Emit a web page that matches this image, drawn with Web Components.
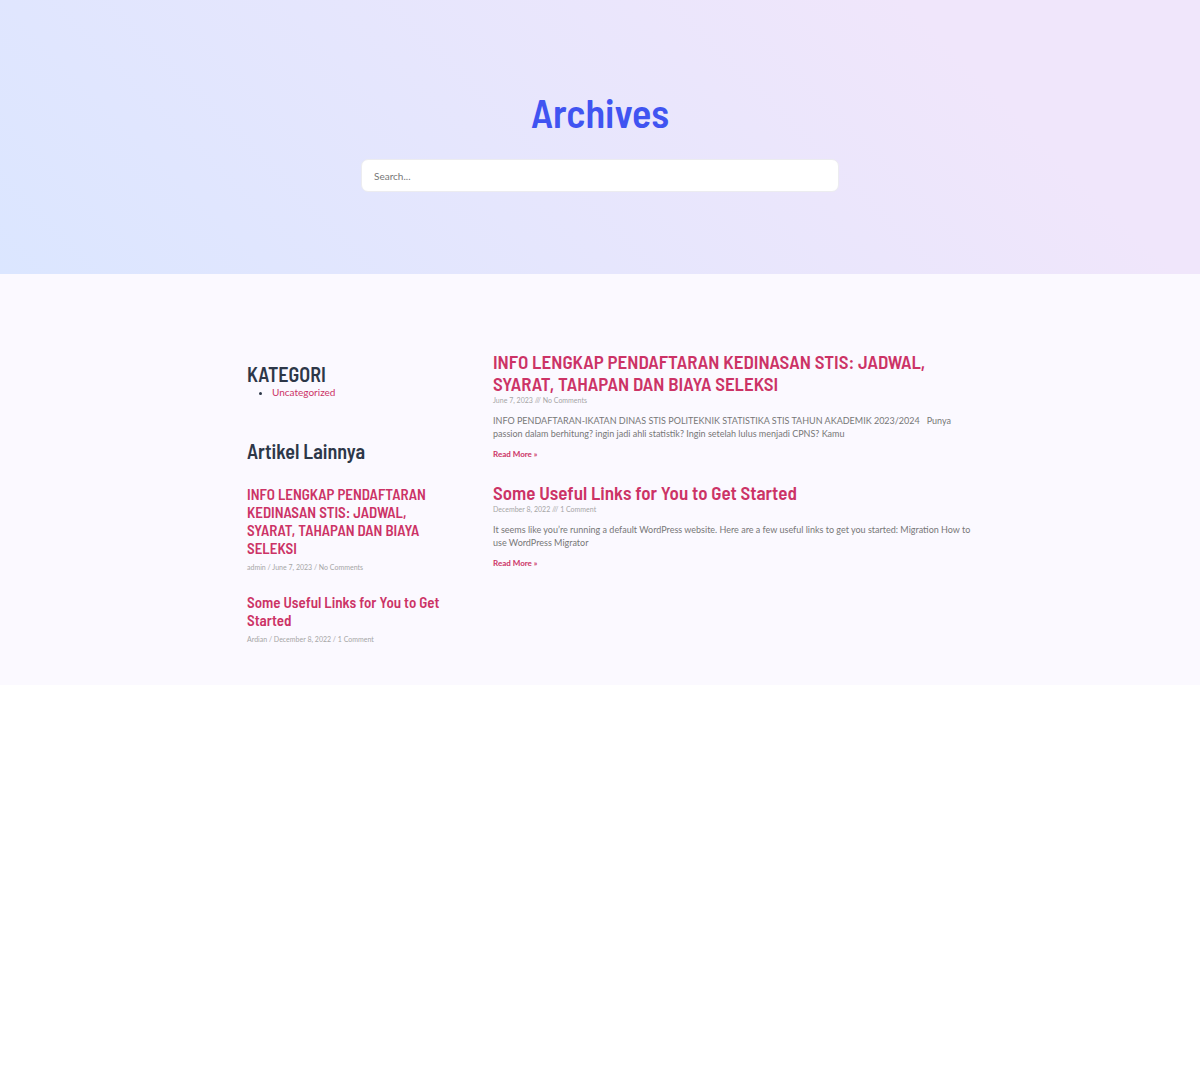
<!DOCTYPE html>
<html lang="id">
<head>
<meta charset="utf-8">
<meta name="viewport" content="width=device-width, initial-scale=1">
<title>Archives</title>
<style>
  body {
    margin: 0;
    background: #fff;
    color: #2d3748;
    font-family: Lato, sans-serif;
    --heading: "Barlow Semi Condensed", "Roboto Condensed", "Liberation Sans Narrow", Roboto, sans-serif;
    --accent: #cc3366;
    --ink: #2d3748;
    --body: #777;
    --muted: #a6a6a6;
  }
</style>
</head>
<body>
<archive-page></archive-page>

<script>
const define = (name, html) => {
  const template = document.createElement('template');
  template.innerHTML = html;
  customElements.define(name, class extends HTMLElement {
    constructor() {
      super();
      this.attachShadow({ mode: 'open' }).append(template.content.cloneNode(true));
    }
  });
};

define('archive-hero', `
  <style>
    :host {
      display: flex; flex-direction: column; align-items: center;
      gap: 22px; padding: 87px 16px 82px; box-sizing: border-box;
      background: linear-gradient(45deg, #dbe6ff 0%, #f0e6fb 80%, #f0e6fb 100%);
    }
    h1 { margin: 0; font: 600 40px/50px var(--heading); color: #4054f1; }
    form { width: 100%; max-width: 478px; }
    input {
      display: block; box-sizing: border-box; width: 100%; height: 33px;
      padding: 0 12px; border: 1px solid #ececf0; border-radius: 7px;
      background: #fff; color: #555; font: 10px/16px Lato, sans-serif;
    }
    input::placeholder { color: #777; opacity: 1; }
  </style>
  <h1><slot></slot></h1>
  <form role="search"><input type="search" aria-label="Search" placeholder="Search..."></form>
`);

define('side-title', `
  <style>
    :host { display: block; }
    h2 { margin: 0; font: 600 20px/22px var(--heading); color: var(--ink); }
  </style>
  <h2><slot></slot></h2>
`);

define('category-list', `
  <style>
    :host { display: block; font-size: 10px; line-height: 15px; }
    ul { margin: 0; padding: 0 0 0 25px; }
    a { color: var(--accent); text-decoration: none; }
  </style>
  <ul><li><a href="#"><slot></slot></a></li></ul>
`);

define('recent-post', `
  <style>
    :host { display: block; }
    h3 { margin: 0 0 4px; font: 600 15px/18px var(--heading); }
    a { color: var(--accent); text-decoration: none; }
    p { margin: 0; font-size: 7px; line-height: 12px; color: var(--muted); }
  </style>
  <h3><a href="#"><slot name="title"></slot></a></h3>
  <p><slot name="meta"></slot></p>
`);

define('post-summary', `
  <style>
    :host { display: block; }
    h2 { margin: 0; font: 600 19px/22px var(--heading); }
    a { color: var(--accent); text-decoration: none; }
    .meta { margin: 0 0 9px; font-size: 7px; line-height: 10px; color: var(--muted); }
    .text { margin: 0 0 8px; font-size: 9px; line-height: 13px; color: var(--body); }
    .more { display: block; font-size: 8px; font-weight: 700; line-height: 12px; }
  </style>
  <h2><a href="#"><slot name="title"></slot></a></h2>
  <p class="meta"><slot name="meta"></slot></p>
  <p class="text"><slot></slot></p>
  <a class="more" href="#">Read More »</a>
`);

define('archive-page', `
  <style>
    :host { display: block; }
    main { background: #fbf9ff; padding: 77px 16px 40px; }
    .columns { display: flex; gap: 46px; max-width: 706px; margin: 0 auto; }
    aside { flex: 0 0 200px; padding-top: 12px; }
    side-title + .recent { margin-top: 23px; }
    category-list { margin-bottom: 40px; }
    .recent { display: flex; flex-direction: column; gap: 20px; }
    .posts { flex: 1; min-width: 0; margin-right: -20px; display: flex; flex-direction: column; gap: 22px; }
  </style>
  <archive-hero>Archives</archive-hero>
  <main>
    <div class="columns">
      <aside>
        <side-title>KATEGORI</side-title>
        <category-list>Uncategorized</category-list>
        <side-title>Artikel Lainnya</side-title>
        <div class="recent">
          <recent-post>
            <span slot="title">INFO LENGKAP PENDAFTARAN KEDINASAN STIS: JADWAL, SYARAT, TAHAPAN DAN BIAYA SELEKSI</span>
            <span slot="meta">admin / June 7, 2023 / No Comments</span>
          </recent-post>
          <recent-post>
            <span slot="title">Some Useful Links for You to Get Started</span>
            <span slot="meta">Ardian / December 8, 2022 / 1 Comment</span>
          </recent-post>
        </div>
      </aside>
      <div class="posts">
        <post-summary>
          <span slot="title">INFO LENGKAP PENDAFTARAN KEDINASAN STIS: JADWAL, SYARAT, TAHAPAN DAN BIAYA SELEKSI</span>
          <span slot="meta">June 7, 2023 /// No Comments</span>
          INFO PENDAFTARAN-IKATAN DINAS STIS POLITEKNIK STATISTIKA STIS TAHUN AKADEMIK 2023/2024 &nbsp; Punya passion dalam berhitung? ingin jadi ahli statistik? Ingin setelah lulus menjadi CPNS? Kamu
        </post-summary>
        <post-summary>
          <span slot="title">Some Useful Links for You to Get Started</span>
          <span slot="meta">December 8, 2022 /// 1 Comment</span>
          It seems like you’re running a default WordPress website. Here are a few useful links to get you started: Migration How to use WordPress Migrator
        </post-summary>
      </div>
    </div>
  </main>
`);
</script>
</body>
</html>
